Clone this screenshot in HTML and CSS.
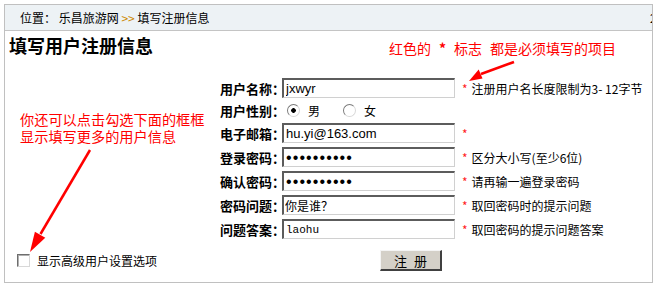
FILE: index.html
```html
<!DOCTYPE html>
<html lang="zh-CN">
<head>
<meta charset="utf-8">
<title>填写注册信息</title>
<link rel="stylesheet" href="styles.css">
</head>
<body>
<div class="box">
  <div class="crumb">
    <span class="crumb-path">位置： 乐昌旅游网 <span class="sep">&gt;&gt;</span> 填写注册信息</span>
    <span class="crumb-date">2</span>
  </div>
  <h1 class="title">填写用户注册信息</h1>
  <form class="form">
    <div class="row">
      <label class="lbl">用户名称：</label>
      <input class="txt latin" type="text" value="jxwyr">
      <span class="hint"><span class="req">*</span>注册用户名长度限制为3- 12字节</span>
    </div>
    <div class="row row-short">
      <label class="lbl">用户性别：</label>
      <div class="radios">
        <input class="radio" type="radio" name="sex" checked><span class="opt">男</span>
        <input class="radio radio-2" type="radio" name="sex"><span class="opt">女</span>
      </div>
    </div>
    <div class="row">
      <label class="lbl">电子邮箱：</label>
      <input class="txt latin" type="text" value="hu.yi@163.com">
      <span class="hint"><span class="req">*</span></span>
    </div>
    <div class="row">
      <label class="lbl">登录密码：</label>
      <input class="txt pwd" type="password" value="abcdefghij">
      <span class="hint"><span class="req">*</span>区分大小写(至少6位)</span>
    </div>
    <div class="row">
      <label class="lbl">确认密码：</label>
      <input class="txt pwd" type="password" value="abcdefghij">
      <span class="hint"><span class="req">*</span>请再输一遍登录密码</span>
    </div>
    <div class="row">
      <label class="lbl">密码问题：</label>
      <input class="txt cjk" type="text" value="你是谁？">
      <span class="hint"><span class="req">*</span>取回密码时的提示问题</span>
    </div>
    <div class="row">
      <label class="lbl">问题答案：</label>
      <input class="txt mono" type="text" value="laohu">
      <span class="hint"><span class="req">*</span>取回密码的提示问题答案</span>
    </div>
    <div class="actions">
      <label class="adv"><input class="check" type="checkbox"><span>显示高级用户设置选项</span></label>
      <button class="submit" type="button">注 册</button>
    </div>
  </form>
  <p class="note note-top">红色的<b class="star">*</b>标志<span class="gap">都是必须填写的项目</span></p>
  <p class="note note-left">你还可以点击勾选下面的框框<br>显示填写更多的用户信息</p>
  <svg class="arrows" width="647" height="278" viewBox="0 0 647 278" aria-hidden="true">
    <line x1="509" y1="57" x2="476" y2="69" stroke="#ff0000" stroke-width="2.5"/>
    <polygon points="464,76 477.5,73.6 473.7,64.4" fill="#ff0000"/>
    <line x1="85" y1="145" x2="35.5" y2="229" stroke="#ff0000" stroke-width="2.5"/>
    <polygon points="25,247 40.3,232.8 29.9,226.8" fill="#ff0000"/>
  </svg>
</div>
</body>
</html>
```

FILE: styles.css
```css
* { box-sizing: border-box; }

body {
  margin: 0;
  background: #fff;
  color: #000;
  font-family: "Noto Sans CJK SC", "Liberation Sans", sans-serif;
  font-size: 12px;
}

.box {
  position: relative;
  margin: 4px 0 0 4px;
  width: 649px;
  border: 1px solid #c0c0c0;
  padding-bottom: 11px;
}

.crumb {
  display: flex;
  height: 26px;
  line-height: 25px;
  padding-left: 15px;
  background: #edf2f5;
  border-bottom: 1px solid #c4c4c4;
  white-space: nowrap;
  overflow: hidden;
}

.sep { color: #cc8800; }

.crumb-date {
  margin-left: auto;
  margin-right: -6px;
  width: 8px;
}

.title {
  margin: 3px 0 0 4px;
  font-size: 18px;
  line-height: 22px;
  font-weight: bold;
}

.form { margin-top: 20px; }

.row {
  display: grid;
  grid-template-columns: 70px 173px 1fr;
  align-items: center;
  height: 24px;
  margin-left: 207px;
}

.row-short { height: 21px; }

.lbl {
  text-align: right;
  padding-right: 0;
  font-size: 13px;
  font-weight: bold;
  white-space: nowrap;
  margin-right: -3px;
}

.txt {
  width: 173px;
  height: 20px;
  margin: 0;
  padding: 0 2px;
  border-top: 2px solid #5c5c5c;
  border-left: 2px solid #5c5c5c;
  border-right: 1px solid #d0d0d0;
  border-bottom: 1px solid #d0d0d0;
  background: #fff;
  color: #000;
  outline: none;
}

.latin { font: 13px "Liberation Sans", Arial, sans-serif; }
.pwd { font: 16px "Liberation Sans", Arial, sans-serif; letter-spacing: 1.1px; }
.cjk { font: 12px "Noto Sans CJK SC", sans-serif; padding-left: 1px; }
.mono { font: 11px "Liberation Mono", monospace; padding-left: 2px; }

.hint {
  padding-left: 7px;
  white-space: nowrap;
}

.req {
  color: #ff2222;
  margin-right: 4px;
}

.radios {
  grid-column: 2 / 4;
  display: flex;
  align-items: center;
}

.radio {
  -webkit-appearance: none;
  appearance: none;
  width: 13px;
  height: 13px;
  margin: 0 0 0 5px;
  border-radius: 50%;
  border: 1px solid;
  border-color: #7a7a7a #d8d8d8 #d8d8d8 #7a7a7a;
  background: #fff;
}

.radio:checked {
  background: radial-gradient(circle, #000 0 2px, #fff 2.6px);
}

.radio-2 { margin-left: 23px; }

.opt {
  margin-left: 8px;
  font-size: 12px;
}

.actions {
  display: grid;
  grid-template-columns: 277px 173px;
  align-items: center;
  margin-top: 9px;
  height: 21px;
}

.adv {
  display: flex;
  align-items: center;
  padding-left: 12px;
  white-space: nowrap;
}

.check {
  -webkit-appearance: none;
  appearance: none;
  width: 13px;
  height: 13px;
  margin: 0 7px 0 0;
  border: 1px solid;
  border-color: #6e6e6e #d8d8d8 #d8d8d8 #6e6e6e;
  box-shadow: inset 1px 1px 0 #b0b0b0;
  background: #fff;
}

.submit {
  width: 62px;
  height: 21px;
  margin: 0 0 0 98px;
  padding: 0;
  background: #d4d0c8;
  border-top: 1px solid #f4f4f4;
  border-left: 1px solid #f4f4f4;
  border-right: 2px solid #404040;
  border-bottom: 2px solid #404040;
  font: 13px "Noto Sans CJK SC", sans-serif;
  word-spacing: 4px;
  color: #000;
}

.note {
  position: absolute;
  margin: 0;
  color: #ff0000;
  font-size: 14px;
  white-space: nowrap;
}

.note-top {
  left: 384px;
  top: 35px;
  line-height: 16px;
}

.star { margin: 0 8px; }
.gap { margin-left: 8px; }

.note-left {
  left: 15px;
  top: 106px;
  line-height: 17px;
  font-size: 14.2px;
}

.arrows {
  position: absolute;
  left: 0;
  top: 0;
  pointer-events: none;
}
```
